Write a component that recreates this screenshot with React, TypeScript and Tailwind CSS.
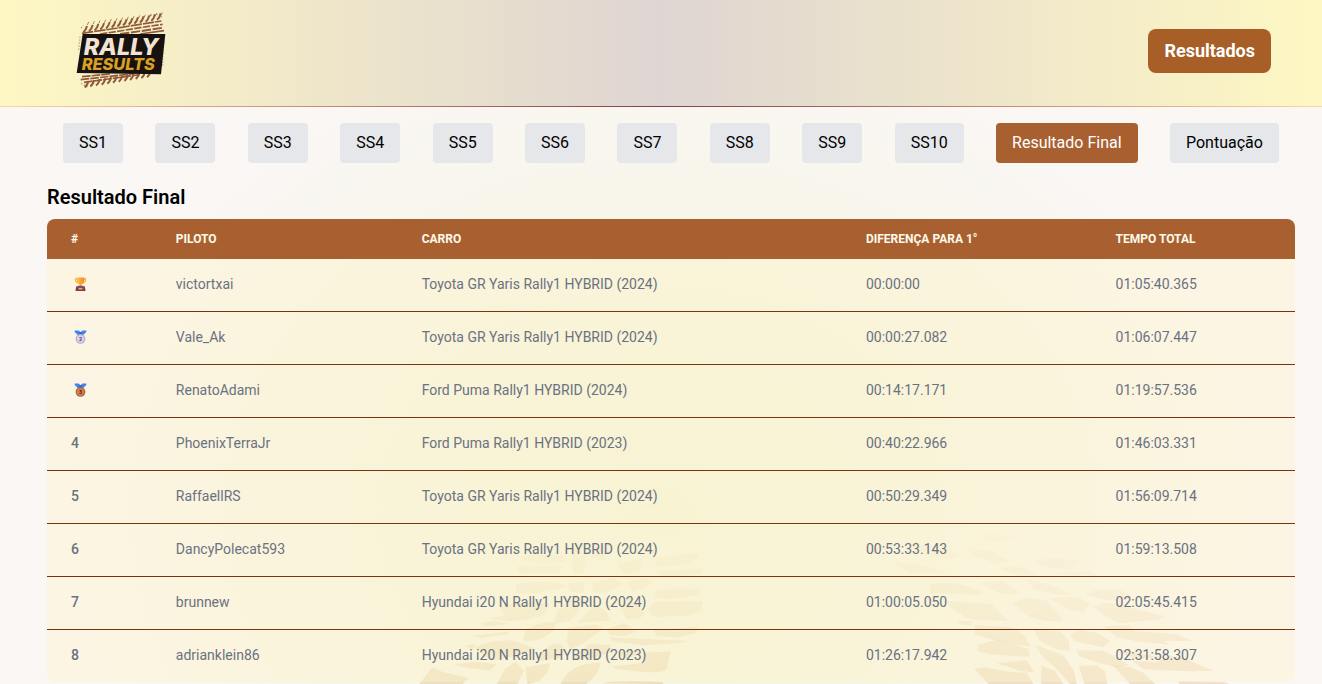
import React from "react";

type Result = {
  pilot: string;
  car: string;
  gap: string;
  total: string;
};

const stages = ["SS1", "SS2", "SS3", "SS4", "SS5", "SS6", "SS7", "SS8", "SS9", "SS10", "Resultado Final", "Pontuação"];
const activeStage = "Resultado Final";

const results: Result[] = [
  { pilot: "victortxai", car: "Toyota GR Yaris Rally1 HYBRID (2024)", gap: "00:00:00", total: "01:05:40.365" },
  { pilot: "Vale_Ak", car: "Toyota GR Yaris Rally1 HYBRID (2024)", gap: "00:00:27.082", total: "01:06:07.447" },
  { pilot: "RenatoAdami", car: "Ford Puma Rally1 HYBRID (2024)", gap: "00:14:17.171", total: "01:19:57.536" },
  { pilot: "PhoenixTerraJr", car: "Ford Puma Rally1 HYBRID (2023)", gap: "00:40:22.966", total: "01:46:03.331" },
  { pilot: "RaffaellRS", car: "Toyota GR Yaris Rally1 HYBRID (2024)", gap: "00:50:29.349", total: "01:56:09.714" },
  { pilot: "DancyPolecat593", car: "Toyota GR Yaris Rally1 HYBRID (2024)", gap: "00:53:33.143", total: "01:59:13.508" },
  { pilot: "brunnew", car: "Hyundai i20 N Rally1 HYBRID (2024)", gap: "01:00:05.050", total: "02:05:45.415" },
  { pilot: "adrianklein86", car: "Hyundai i20 N Rally1 HYBRID (2023)", gap: "01:26:17.942", total: "02:31:58.307" },
];

const treadBlocks = [0, 1, 2, 3, 4, 5, 6, 7, 8, 9, 10, 11, 12, 13];

function Logo() {
  return (
    <svg viewBox="36 3 300 300" className="size-[100px]" role="img" aria-label="Rally Results">
      <g stroke="#8f5a3c" fill="none">
        {treadBlocks.map((i) => (
          <path key={`a${i}`} strokeWidth="6" d={`M${70 + i * 17} ${97 - i * 2.9}q8 -6 11 -19`} />
        ))}
        {treadBlocks.map((i) => (
          <path key={`b${i}`} strokeWidth="3" d={`M${82 + i * 17} ${75 - i * 2.2}l4 -9`} opacity=".75" />
        ))}
        <path strokeWidth="5" d="M66 100L120 92L180 83L240 73L304 63" strokeDasharray="34 3" />
        <path strokeWidth="5" d="M120 102L180 93L240 83L308 73" strokeDasharray="22 4" />
        <path strokeWidth="6" d="M180 102L250 92L310 83" strokeDasharray="28 5" />
        <path strokeWidth="5" d="M240 102L312 92" />
        <path strokeWidth="5" d="M66 230L150 222M62 239L220 221M72 247L240 224" strokeDasharray="26 3" />
        {treadBlocks.slice(0, 12).map((i) => (
          <path key={`c${i}`} strokeWidth="6" d={`M${74 + i * 17} ${262 - i * 2.8}q8 -5 11 -19`} />
        ))}
        <path
          strokeWidth="4"
          strokeDasharray="3 6"
          d="M312 122L308 170L308 200M60 110L56 150M64 84L70 76M272 46L300 42L306 54M64 250L84 262"
          opacity=".7"
        />
      </g>
      <path d="M68 102L316 102L303 223L50 219Z" fill="#17120f" />
      <text x="71" y="165" fontFamily="Inter, 'Liberation Sans', sans-serif" fontWeight="800" fontStyle="italic" fontSize="70" fill="#f3e3d3">
        RALLY
      </text>
      <text x="65" y="211" fontFamily="Inter, 'Liberation Sans', sans-serif" fontWeight="800" fontStyle="italic" fontSize="49" fill="#d9a023">
        RESULTS
      </text>
    </svg>
  );
}

function Trophy() {
  return (
    <svg viewBox="0 0 32 36" className="ml-[3px] h-[14px] w-[13px]" role="img" aria-label="1">
      <defs>
        <linearGradient id="cup" x1="0" x2="1">
          <stop offset="0" stopColor="#ffc83d" />
          <stop offset="1" stopColor="#ee8a2b" />
        </linearGradient>
      </defs>
      <path d="M7 5H3c-1 6 2 9 7 10M25 5h4c1 6-2 9-7 10" fill="none" stroke="#f5b040" strokeWidth="3" />
      <path d="M6 1h20c0 10-2 17-8 18v5h-4v-5C8 18 6 11 6 1Z" fill="url(#cup)" />
      <path d="M10 22h12v4H10z" fill="#b5607a" />
      <path d="M5 24h22l2 12H3Z" fill="#7d4059" />
      <path d="M11 28h10v4H11z" fill="#f5b53d" />
    </svg>
  );
}

function Medal({ place }: { place: 2 | 3 }) {
  const silver = place === 2;
  return (
    <svg viewBox="0 0 32 36" className="ml-[3px] h-[14px] w-[13px]" role="img" aria-label={`${place}`}>
      <path d="M1 1h10l5 5 5-5h10v4l-8 8H9L1 5Z" fill="#3f86ef" />
      <path d="M12 6h8l-2 5h-4Z" fill="#2465c9" />
      <circle cx="16" cy="23" r="12.5" fill={silver ? "#b7a9cf" : "#b0603c"} />
      <circle cx="16" cy="23" r="9.5" fill={silver ? "#ddd3ee" : "#d08350"} />
      <text x="16" y="28" textAnchor="middle" fontFamily="Roboto, sans-serif" fontSize="14" fontWeight="700" fill={silver ? "#4b4060" : "#4e2516"}>
        {place}
      </text>
    </svg>
  );
}

function TireTracks() {
  return (
    <svg viewBox="0 0 1322 160" className="absolute bottom-0 left-0 w-full" aria-hidden="true">
      <defs>
        <linearGradient id="fade" gradientUnits="userSpaceOnUse" x1="0" y1="0" x2="0" y2="480">
          <stop offset="0" stopColor="#c98f45" stopOpacity="0.02" />
          <stop offset="0.5" stopColor="#c98f45" stopOpacity="0.1" />
          <stop offset="1" stopColor="#c98f45" stopOpacity="0.22" />
        </linearGradient>
      </defs>
      <g transform="translate(410 0) scale(.33333)" fill="url(#fade)">
        <path d="M330 96Q380 84 455 96L470 112Q400 122 345 112ZM318 128L455 126L450 148L330 150ZM480 60L530 90L520 145L490 150ZM550 62L600 66L580 110L545 100ZM730 104L860 86L870 98L840 120L740 128ZM620 120L700 104L690 140L640 150ZM740 140L880 134L870 150L760 158Z" />
        <path d="M318 182Q330 170 454 176L470 190L420 200Q360 214 318 206ZM470 180L525 170L520 206L480 204ZM545 176L610 160L640 180L590 206L550 204ZM650 176L710 160L720 180L670 204ZM735 200Q780 190 872 196L868 214Q800 228 735 222Z" />
        <path d="M270 250Q320 226 420 240L408 268Q350 296 276 290L240 284L282 274ZM212 296L250 290L300 300L224 308ZM440 262L500 214L530 230L480 290L432 300ZM505 296L555 240L590 262L600 290ZM630 244L660 222L706 270L690 282L650 286ZM732 234L878 230L874 260L830 276L730 278L712 256Z" />
        <path d="M345 320Q390 290 436 294Q440 320 405 338Q370 356 340 350ZM180 336L300 322L290 332L214 342ZM476 310L560 302L580 316L520 356L480 378L470 352ZM590 316L640 296L680 320L650 336L600 334ZM730 318L864 308L860 326L800 340L740 336ZM600 340L720 346L830 350L820 356L700 364L640 356L606 352Z" />
        <path d="M196 370Q250 344 310 350L372 372L340 392L250 408L220 396ZM160 366L200 358L190 376ZM380 396Q424 350 456 362Q472 390 450 402L386 410ZM490 400L540 360L600 362L610 380L560 400L504 408ZM630 384L690 378L680 396L640 402ZM700 386L782 382L770 436Q760 448 700 444L616 434L606 428L700 416Z" />
        <path d="M36 470L66 430L100 444L176 462L158 480L28 480ZM128 420L200 414L260 420L240 440L160 430ZM260 480L284 436L316 414L342 440L322 480ZM346 430L420 418L416 438L390 470L352 480ZM452 480Q470 436 526 420L572 416Q566 454 528 480ZM574 478Q640 466 760 474L758 480Z" />
      </g>
      <g transform="translate(930 0) scale(.33333)" fill="url(#fade)">
        <path d="M-70 60L20 66L90 92L60 106L-20 90ZM100 70L180 80L240 110L200 120L130 96ZM320 110Q370 94 440 110Q440 132 396 136Q340 132 320 118ZM150 30Q210 20 260 44Q220 60 160 48ZM200 130L280 130L320 156L260 154ZM380 150L480 140L500 156ZM-120 110L-40 120L60 146L-60 148Z" />
        <path d="M0 180Q60 168 130 192L160 204L140 212L0 208ZM150 176L220 170L270 206L236 212L200 204ZM290 164L380 190L430 212L380 212L310 196ZM466 212Q500 190 560 198Q600 204 606 222L560 232L520 226Z" />
        <path d="M40 230L186 240L214 270L236 290L130 288Q80 270 40 230ZM246 236L290 222L350 230L370 250L400 290L350 292L300 280ZM356 222L440 218L480 240L460 266L410 254ZM520 236L580 242L640 262L706 276L690 286L570 298L530 280L490 250ZM80 290L130 292L120 304L90 300Z" />
        <path d="M134 304L250 310L284 336L300 366L260 364L168 342L134 330ZM310 316L390 322L416 350L420 380L380 376L330 350ZM420 330L450 318L500 326L540 352L520 370L460 358L430 350ZM520 306L600 304L610 320L740 330L786 352L700 350L720 362L620 352L560 340Z" />
        <path d="M144 364L200 346L296 376L300 398L240 396L176 390L142 380ZM316 362L400 394L432 440L440 480L420 480L380 436L338 398ZM440 378L520 380L560 400L596 424L560 430L490 412L448 396ZM550 376L640 390L700 400L620 404ZM720 396L766 404L850 440L780 442L640 436L606 410L680 414Z" />
        <path d="M132 434L160 430L240 444L290 446L310 480L176 480ZM200 418L290 408L314 446L270 440ZM334 424L376 442L400 480L334 480ZM446 426L500 424L524 440L532 480L464 480ZM548 424L600 430L640 446L676 480L600 480ZM744 472L880 474L900 480L748 480Z" />
      </g>
    </svg>
  );
}

function Position({ place }: { place: number }) {
  if (place === 1) return <Trophy />;
  if (place === 2 || place === 3) return <Medal place={place} />;
  return <>{place}</>;
}

export default function App() {
  return (
    <div className="relative min-h-screen bg-[#faf7f5] bg-[radial-gradient(ellipse_45%_70%_at_50%_75%,#f3f4da_0%,#f6f5e3_45%,#faf7f5_100%)] font-[Roboto,'Liberation_Sans',sans-serif] text-black">
      <TireTracks />
      <div className="relative">
        <header className="bg-[linear-gradient(to_right,#fef7c3,#dfd5d2,#fef7c3)]">
          <div className="flex items-center justify-between pt-px pr-[51px] pb-[5px] pl-[72px]">
            <a href="#inicio">
              <Logo />
            </a>
            <a href="#resultados" className="rounded-lg bg-[#a85f27] px-4 py-2 text-lg font-bold text-white">
              Resultados
            </a>
          </div>
          <div className="h-px bg-[linear-gradient(to_right,#fbd7a0,#84404a,#fbd7a0)]" />
        </header>

        <main className="pr-[27px] pl-[47px]">
          <nav className="flex justify-between overflow-x-auto p-4" aria-label="Etapas">
            {stages.map((stage) => (
              <button
                key={stage}
                type="button"
                className={
                  stage === activeStage
                    ? "rounded bg-[#a96030] px-4 py-2 text-base whitespace-nowrap text-white"
                    : "rounded bg-gray-200 px-4 py-2 text-base whitespace-nowrap text-black"
                }
              >
                {stage}
              </button>
            ))}
          </nav>

          <h2 className="pt-1 pb-2 text-xl font-semibold">Resultado Final</h2>

          <div className="overflow-hidden rounded-lg">
            <table className="w-full table-fixed text-left text-sm text-gray-500">
              <colgroup>
                <col className="w-[8.4%]" />
                <col className="w-[19.7%]" />
                <col className="w-[35.6%]" />
                <col className="w-[20%]" />
                <col />
              </colgroup>
              <thead className="bg-[#a96030] text-xs text-amber-50 uppercase">
                <tr>
                  <th scope="col" className="px-6 py-3">#</th>
                  <th scope="col" className="px-6 py-3">Piloto</th>
                  <th scope="col" className="px-6 py-3">Carro</th>
                  <th scope="col" className="px-6 py-3">Diferença para 1°</th>
                  <th scope="col" className="px-6 py-3">Tempo Total</th>
                </tr>
              </thead>
              <tbody className="bg-[#fef3c7]/40">
                {results.map((result, index) => (
                  <tr key={result.pilot} className="border-b border-[#78350f] last:border-b-0">
                    <th scope="row" className="px-6 pt-[15px] pb-[17px] font-medium">
                      <Position place={index + 1} />
                    </th>
                    <td className="px-6 pt-[15px] pb-[17px]">{result.pilot}</td>
                    <td className="px-6 pt-[15px] pb-[17px]">{result.car}</td>
                    <td className="px-6 pt-[15px] pb-[17px]">{result.gap}</td>
                    <td className="px-6 pt-[15px] pb-[17px]">{result.total}</td>
                  </tr>
                ))}
              </tbody>
            </table>
          </div>
        </main>
      </div>
    </div>
  );
}
